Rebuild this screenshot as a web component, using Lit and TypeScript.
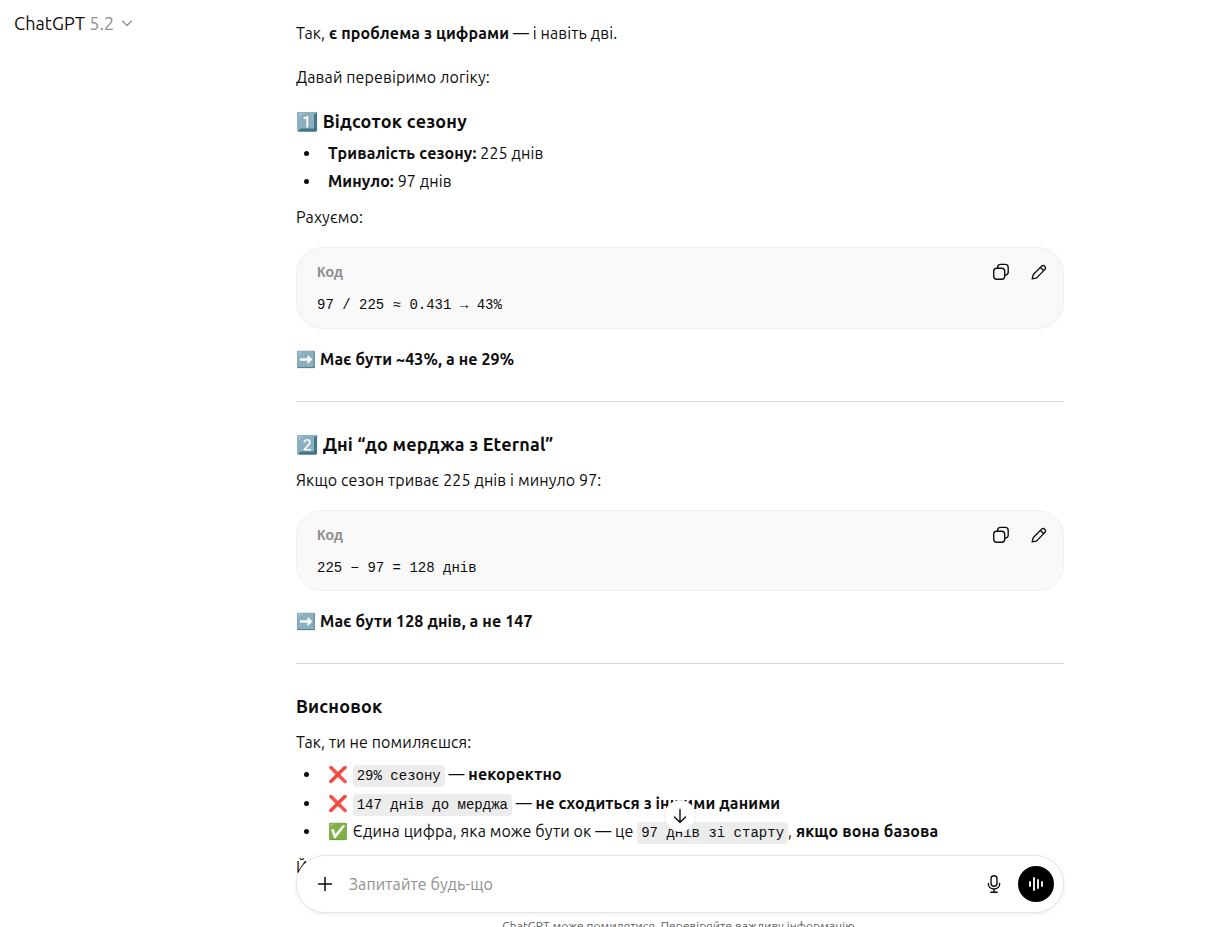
import { LitElement, html, css } from "lit";
import { customElement } from "lit/decorators.js";

const copyIcon = html`<svg class="ic" width="20" height="20" viewBox="0 0 20 20" fill="none" stroke="currentColor" stroke-width="1.35" stroke-linejoin="round"><rect x="2.7" y="6.2" width="11" height="11" rx="3"/><path d="M6.6 6.2V5.4a3 3 0 0 1 3-3h4.6a3 3 0 0 1 3 3V10a3 3 0 0 1-3 3.2h-.5"/></svg>`;
const editIcon = html`<svg class="ic" width="20" height="20" viewBox="0 0 20 20" fill="none" stroke="currentColor" stroke-width="1.35" stroke-linejoin="round" stroke-linecap="round"><path d="M3.2 16.8l.9-3.6a2 2 0 0 1 .5-.9l8-8.2a2.1 2.1 0 0 1 3 0l.3.3a2.1 2.1 0 0 1 0 3l-8 8.2a2 2 0 0 1-.9.5z"/><path d="M11.4 5.4l3.2 3.2"/></svg>`;

@customElement("app-root")
export class AppRoot extends LitElement {
  static styles = css`
    :host { display: block; width: 1212px; height: 927px; overflow: hidden; position: relative; background: #fff; color: #0d0d0d; font-family: "Ubuntu", "Noto Sans", "Open Sans", sans-serif; font-size: 16px; letter-spacing: .12px; }
    .page { display: flex; flex-direction: column; width: 768px; margin-left: 296px; padding-top: 21px; }
    .top { position: absolute; left: 14px; top: 12px; display: flex; align-items: center; font-size: 18px; line-height: 22px; gap: 5px; letter-spacing: .1px; }
    .ver { color: #8f8f8f; }
    .top svg { color: #8f8f8f; margin-left: 1px; }
    p { margin: 0; line-height: 24px; }
    h3 { margin: 0; font-size: 18px; line-height: 26px; font-weight: 700; letter-spacing: .18px; }
    b { font-weight: 700; }
    .m20 { margin-top: 20px; }
    .m18 { margin-top: 18px; }
    .h1 { margin-top: 19px; }
    .h2 { margin-top: 29px; }
    .m12 { margin-top: 12px; }
    .m11 { margin-top: 11px; }
    ul { margin: 3px 0 0; padding: 0 0 0 25px; list-style: disc; }
    li { line-height: 24px; margin-top: 4px; padding-left: 7px; }
    ul.tight { margin-top: 3.5px; }
    ul.tight li { margin-top: 4.5px; }
    .code { margin-top: 18px; height: 81.5px; box-sizing: border-box; border: 1px solid #f0f0f0; background: #f9f9f9; border-radius: 26px; padding: 14px 20px 0; position: relative; letter-spacing: 0; }
    .lbl { font-size: 14px; font-weight: 700; color: #8f8f8f; line-height: 20px; font-family: "Liberation Sans", sans-serif; }
    pre { margin: 13px 0 0; font-family: "Liberation Mono", monospace; font-size: 14px; line-height: 20px; color: #0d0d0d; }
    .acts { position: absolute; right: 14px; top: 14px; display: flex; gap: 18px; }
    .ic { display: block; }
    hr { border: 0; border-top: 1px solid #d9d9d9; margin: 30px 0 0; height: 0; }
    code { font-family: "Liberation Mono", monospace; font-size: 14px; line-height: 16px; background: #ececec; border-radius: 4px; padding: 3px 4px; letter-spacing: 0; }
    .em { font-family: "Noto Color Emoji", sans-serif; letter-spacing: 0; line-height: 16px; margin-right: 1px; }
    .composer { position: absolute; left: 296px; top: 855px; width: 768px; height: 58px; box-sizing: border-box; background: #fff; border: 1px solid #e6e6e6; border-radius: 29px; box-shadow: 0 1px 4px rgba(0,0,0,.08); display: flex; align-items: center; padding: 0 9px 0 18px; }
    .ph { color: #8f8f8f; margin-left: 14px; flex: 1; }
    .mic { margin-right: 14px; }
    .voice { width: 36px; height: 36px; border-radius: 50%; background: #000; display: flex; align-items: center; justify-content: center; }
    .down { position: absolute; left: 664px; top: 800px; width: 32px; height: 32px; box-sizing: border-box; border-radius: 50%; background: #fff; border: 1px solid #f0f0f0; box-shadow: 0 1px 3px rgba(0,0,0,.04); display: flex; align-items: center; justify-content: center; }
    .foot { position: absolute; left: 0; width: 1360px; top: 918px; text-align: center; font-size: 12px; line-height: 16px; color: #5d5d5d; letter-spacing: .07px; }
  `;
  render() {
    return html`
      <div class="top"><span>ChatGPT <span class="ver">5.2</span></span>
        <svg width="14" height="14" viewBox="0 0 14 14" fill="none" stroke="currentColor" stroke-width="1.2" stroke-linecap="round" stroke-linejoin="round"><path d="M2.5 5l4.5 4.5L11.5 5"/></svg>
      </div>
      <div class="page">
        <p>Так, <b>є проблема з цифрами</b> — і навіть дві.</p>
        <p class="m20">Давай перевіримо логіку:</p>
        <h3 class="h1">1️⃣ Відсоток сезону</h3>
        <ul><li><b>Тривалість сезону:</b> 225 днів</li><li><b>Минуло:</b> 97 днів</li></ul>
        <p class="m12">Рахуємо:</p>
        <div class="code"><div class="lbl">Код</div><pre>97 / 225 ≈ 0.431 → 43%</pre><div class="acts">${copyIcon}${editIcon}</div></div>
        <p class="m18"><b>➡️ Має бути ~43%, а не 29%</b></p>
        <hr />
        <h3 class="h2">2️⃣ Дні “до мерджа з Eternal”</h3>
        <p class="m11">Якщо сезон триває 225 днів і минуло 97:</p>
        <div class="code"><div class="lbl">Код</div><pre>225 − 97 = 128 днів</pre><div class="acts">${copyIcon}${editIcon}</div></div>
        <p class="m18"><b>➡️ Має бути 128 днів, а не 147</b></p>
        <hr />
        <h3 class="h2">Висновок</h3>
        <p class="m11">Так, ти не помиляєшся:</p>
        <ul class="tight"><li><span class="em">❌</span> <code>29% сезону</code> — <b>некоректно</b></li><li><span class="em">❌</span> <code>147 днів до мерджа</code> — <b>не сходиться з іншими даними</b></li><li><span class="em">✅</span> Єдина цифра, яка може бути ок — це <code>97 днів зі старту</code>, <b>якщо вона базова</b></li></ul>
        <p class="m12">Й</p>
      </div>
      <div class="down"><svg width="18" height="18" viewBox="0 0 18 18" fill="none" stroke="#0d0d0d" stroke-width="1.4" stroke-linecap="round" stroke-linejoin="round"><path d="M9 2.5v13M3.5 10L9 15.5 14.5 10"/></svg></div>
      <div class="composer">
        <svg width="20" height="20" viewBox="0 0 20 20" fill="none" stroke="#0d0d0d" stroke-width="1.5" stroke-linecap="round"><path d="M10 3.5v13M3.5 10h13"/></svg>
        <span class="ph">Запитайте будь-що</span>
        <svg class="mic" width="20" height="20" viewBox="0 0 20 20" fill="none" stroke="#0d0d0d" stroke-width="1.4" stroke-linecap="round"><rect x="7" y="1.8" width="6" height="10.5" rx="3"/><path d="M4.3 9.5c0 3.3 2.5 5.5 5.7 5.5s5.7-2.2 5.7-5.5M10 15v3M6.8 18.2h6.4"/></svg>
        <div class="voice"><svg width="20" height="20" viewBox="0 0 20 20" fill="none" stroke="#fff" stroke-width="1.8" stroke-linecap="round"><path d="M4 8v4M8 4v12M12 6v8M16 8v4" /></svg></div>
      </div>
      <div class="foot">ChatGPT може помилятися. Перевіряйте важливу інформацію.</div>
    `;
  }
}
